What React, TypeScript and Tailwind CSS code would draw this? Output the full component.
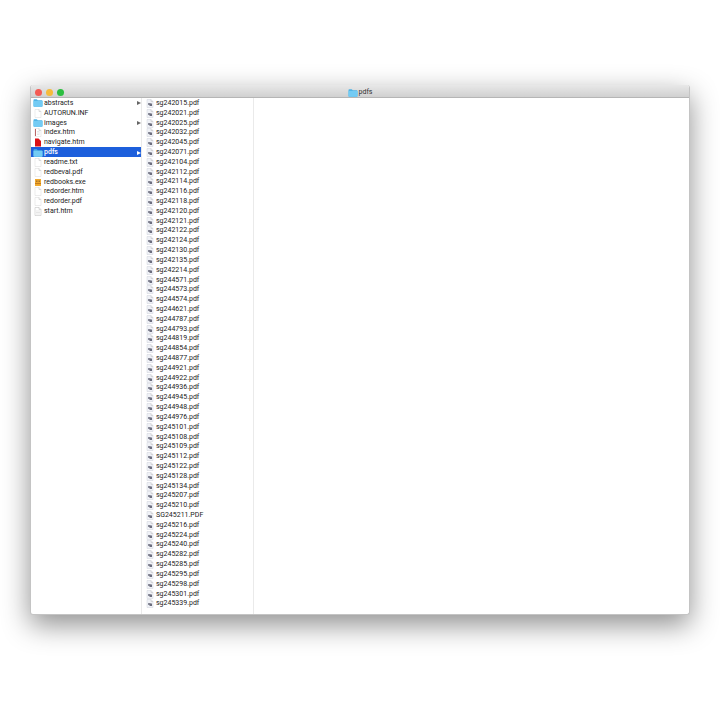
import React, { useState } from "react";
import clsx from "clsx";

type Kind = "folder" | "blank" | "html" | "red" | "exe" | "faint" | "page" | "pdf";

type Entry = { name: string; kind: Kind };

const rootEntries: Entry[] = [
  { name: "abstracts", kind: "folder" },
  { name: "AUTORUN.INF", kind: "blank" },
  { name: "images", kind: "folder" },
  { name: "index.htm", kind: "html" },
  { name: "navigate.htm", kind: "red" },
  { name: "pdfs", kind: "folder" },
  { name: "readme.txt", kind: "faint" },
  { name: "redbeval.pdf", kind: "faint" },
  { name: "redbooks.exe", kind: "exe" },
  { name: "redorder.htm", kind: "faint" },
  { name: "redorder.pdf", kind: "faint" },
  { name: "start.htm", kind: "page" },
];

const pdfNames = `sg242015.pdf sg242021.pdf sg242025.pdf sg242032.pdf sg242045.pdf sg242071.pdf
sg242104.pdf sg242112.pdf sg242114.pdf sg242116.pdf sg242118.pdf sg242120.pdf sg242121.pdf
sg242122.pdf sg242124.pdf sg242130.pdf sg242135.pdf sg242214.pdf sg244571.pdf sg244573.pdf
sg244574.pdf sg244621.pdf sg244787.pdf sg244793.pdf sg244819.pdf sg244854.pdf sg244877.pdf
sg244921.pdf sg244922.pdf sg244936.pdf sg244945.pdf sg244948.pdf sg244976.pdf sg245101.pdf
sg245108.pdf sg245109.pdf sg245112.pdf sg245122.pdf sg245128.pdf sg245134.pdf sg245207.pdf
sg245210.pdf SG245211.PDF sg245216.pdf sg245224.pdf sg245240.pdf sg245282.pdf sg245285.pdf
sg245295.pdf sg245298.pdf sg245301.pdf sg245339.pdf`.split(/\s+/);

function FolderIcon() {
  return (
    <svg viewBox="0 0 20 16" className="h-2 w-[10px] shrink-0" aria-hidden="true">
      <path d="M1 2q0-1.500 1.500-1.500h5l2 2h8q1.500 0 1.500 1.500v10q0 1.500-1.500 1.500h-15q-1.500 0-1.500-1.500z" fill="#4fb4e6" />
      <path d="M1 4h18v10q0 1.500-1.500 1.500h-15q-1.500 0-1.500-1.500z" fill="#73cbf4" />
    </svg>
  );
}

function FileIcon({ kind }: { kind: Kind }) {
  if (kind === "folder") return <FolderIcon />;

  if (kind === "exe") {
    return (
      <svg viewBox="0 0 20 18" className="h-[9px] w-[10px] shrink-0" aria-hidden="true">
        <path d="M4 2h12v14H4z" fill="#f0a92e" />
        <path d="M6 5h3v3H6zM11 5h3v3h-3z" fill="#a8722a" />
        <path d="M4 10h12v2H4z" fill="#c47b1c" />
      </svg>
    );
  }

  if (kind === "red") {
    return (
      <svg viewBox="0 0 20 18" className="h-[9px] w-[10px] shrink-0" aria-hidden="true">
        <path d="M4 1h7l5 5v11H4z" fill="#dc1014" />
      </svg>
    );
  }

  return (
    <svg viewBox="0 0 20 18" className="h-[9px] w-[10px] shrink-0" aria-hidden="true">
      <path
        d="M4 1h8l4 4v12H4z"
        fill={kind === "pdf" ? "#f0f2f7" : "#fff"}
        stroke={kind === "page" ? "#bbb" : kind === "pdf" ? "#ced2da" : "#d8d8d8"}
      />
      <path d="M12 1v4h4" fill="none" stroke="#bcbcbc" />
      {kind === "html" && (
        <>
          <path d="M5 2v14" stroke="#b66" strokeWidth="2" />
          <path d="M8 7h5M8 10h6M8 13h5" stroke="#ccc" />
        </>
      )}
      {kind === "page" && <path d="M6 8h8M6 11h8M6 14h8" stroke="#ccc" />}
      {kind === "pdf" && (
        <>
          <path d="M6 8h5v4H6z" fill="#8c8e9c" />
          <path d="M9 9h5v5H9z" fill="#6c6e7e" />
        </>
      )}
    </svg>
  );
}

type RowProps = {
  entry: Entry;
  selected?: boolean;
  onSelect: () => void;
};

function Row({ entry, selected, onSelect }: RowProps) {
  return (
    <li className="flex min-h-0 flex-1">
      <button
        type="button"
        onClick={onSelect}
        className={clsx(
          "flex w-full items-center gap-px pt-px pl-[2px] text-left",
          selected ? "bg-[#1d5fdc] font-medium text-white" : "text-[#222]"
        )}
      >
        <FileIcon kind={entry.kind} />
        <span className="flex-1 whitespace-nowrap">{entry.name}</span>
        {entry.kind === "folder" && (
          <svg viewBox="0 0 8 8" className="size-1 shrink-0" aria-hidden="true">
            <path d="M0 0l8 4-8 4z" fill={selected ? "#fff" : "#666"} />
          </svg>
        )}
      </button>
    </li>
  );
}

function App() {
  const [selected, setSelected] = useState("pdfs");

  return (
    <div className="min-h-screen bg-white px-[30px] pt-[85px] pb-[105px] font-[Roboto,'Liberation_Sans',sans-serif] text-[7px] leading-[9px]">
      <main className="overflow-hidden rounded-[3px] border border-t-0 border-[#c4c4c4] bg-white shadow-[0_10px_28px_rgba(0,0,0,0.44)]">
        <header className="grid h-[13px] grid-cols-3 items-center border-b border-[#b5b5b5] bg-linear-to-b from-[#e8e8e8] to-[#d0d0d0] pt-[2px]">
          <div className="flex gap-1 pl-1">
            <button type="button" aria-label="Close" className="size-[7px] rounded-full bg-[#f35b54]" />
            <button type="button" aria-label="Minimize" className="size-[7px] rounded-full bg-[#f6bb3b]" />
            <button type="button" aria-label="Zoom" className="size-[7px] rounded-full bg-[#2bbe40]" />
          </div>
          <h1 className="flex items-center justify-center gap-px pt-px text-[#333]">
            <FolderIcon />
            pdfs
          </h1>
        </header>
        <div className="flex">
          <div className="w-[111px] shrink-0 border-r border-[#eaeaea]">
            <ul className="flex h-[118px] flex-col">
              {rootEntries.map((entry) => (
                <Row
                  key={entry.name}
                  entry={entry}
                  selected={selected === entry.name}
                  onSelect={() => setSelected(entry.name)}
                />
              ))}
            </ul>
          </div>
          <div className="w-28 shrink-0 border-r border-[#eaeaea] pb-[6px] pl-px">
            <ul className="flex h-[510px] flex-col">
              {pdfNames.map((name) => (
                <Row
                  key={name}
                  entry={{ name, kind: "pdf" }}
                  selected={selected === name}
                  onSelect={() => setSelected(name)}
                />
              ))}
            </ul>
          </div>
        </div>
      </main>
    </div>
  );
}

export default App;
